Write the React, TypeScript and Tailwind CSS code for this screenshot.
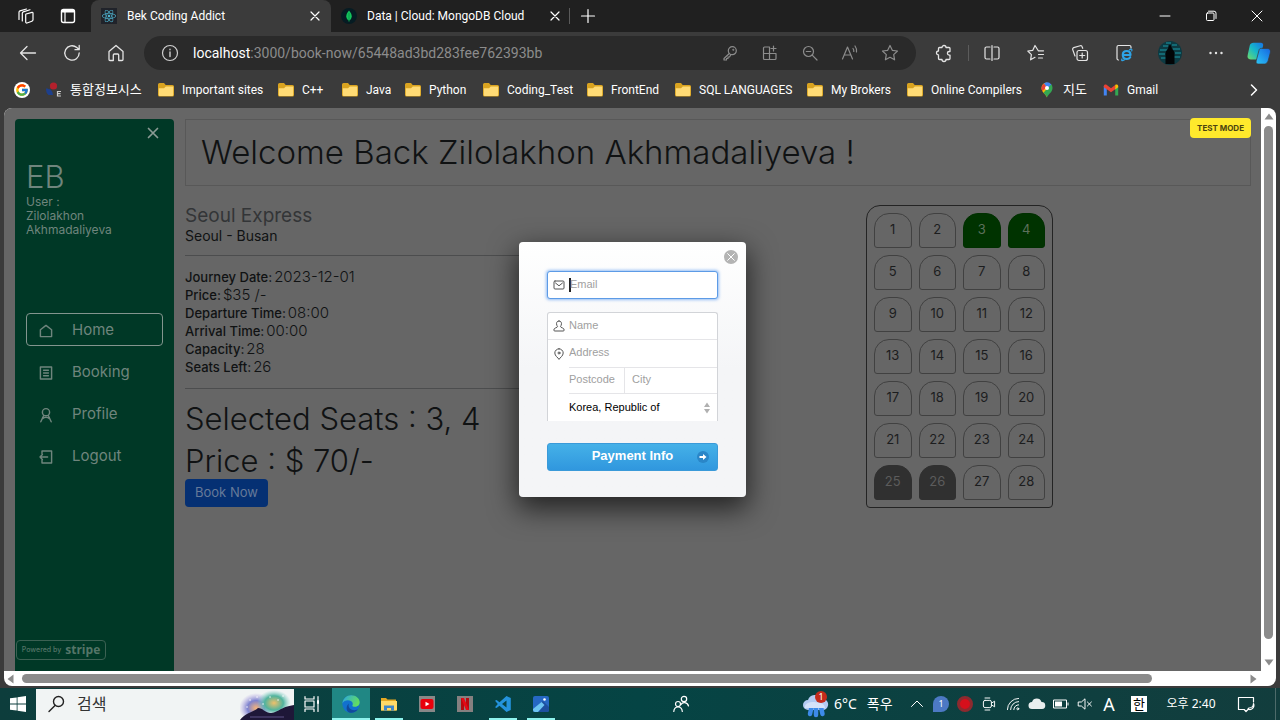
import React from "react";
import { FcGoogle } from "react-icons/fc";
import { FaReact } from "react-icons/fa";

type IconProps = { className?: string; children: React.ReactNode; box?: string };

function Icon({ className = "size-5", children, box = "0 0 20 20" }: IconProps) {
  return (
    <svg
      viewBox={box}
      className={`shrink-0 ${className}`}
      fill="none"
      stroke="currentColor"
      strokeWidth="1.2"
      strokeLinecap="round"
      strokeLinejoin="round"
      aria-hidden="true"
    >
      {children}
    </svg>
  );
}

function IconButton({ label, width, children }: { label: string; width: string; children: React.ReactNode }) {
  return (
    <button aria-label={label} className={`flex h-full shrink-0 items-center justify-center ${width}`}>
      {children}
    </button>
  );
}

const Cross = ({ className = "size-3" }: { className?: string }) => (
  <Icon className={className} box="0 0 12 12">
    <path d="M2 2l8 8M10 2l-8 8" />
  </Icon>
);

function MongoLeaf() {
  return (
    <svg viewBox="0 0 16 16" className="size-4 shrink-0" aria-hidden="true">
      <circle cx="8" cy="8" r="8" fill="#061c23" />
      <path d="M8 2.500c1.600 2 2.700 3.600 2.700 5.700C10.700 10.300 9.500 11.800 8 12.700 6.500 11.800 5.300 10.300 5.300 8.200 5.300 6.100 6.400 4.500 8 2.500z" fill="#13c45c" />
      <path d="M8 5v9" stroke="#0a8a46" strokeWidth=".7" />
    </svg>
  );
}

function TabStrip() {
  return (
    <header className="flex h-8 shrink-0 items-stretch bg-[#202020] text-xs text-white">
      <div className="flex w-[91px] shrink-0 items-center pl-2">
        <IconButton label="Workspaces" width="w-9">
          <Icon className="size-5">
            <path d="M10 8l6-1.700a.8.8 0 0 1 1 .8v6.700a1.500 1.500 0 0 1-1.100 1.400L11 17a1 1 0 0 1-1.300-1V8.500z" />
            <path d="M6.300 15V7.300a1.500 1.500 0 0 1 1-1.400L14 3.800M3 13.500V6.300a1.500 1.500 0 0 1 1-1.400L10.500 3" />
          </Icon>
        </IconButton>
        <IconButton label="Tab actions" width="w-12">
          <Icon className="size-5">
            <rect x="3.500" y="3.500" width="13" height="13" rx="2" strokeWidth="1.400" />
            <path d="M4.500 5.300h11" strokeWidth="2.600" />
            <path d="M7 6v10" />
          </Icon>
        </IconButton>
      </div>
      <div className="flex w-60 shrink-0 items-center rounded-t-lg bg-[#3b3b3b] pr-2 pl-2.5">
        <span className="flex size-4 items-center justify-center bg-[#20232a] text-[#4fb4d0]">
          <FaReact className="size-3.5" />
        </span>
        <span className="flex-1 pl-2.5">Bek Coding Addict</span>
        <IconButton label="Close Bek Coding Addict" width="w-4">
          <Cross />
        </IconButton>
      </div>
      <div className="flex w-[238px] shrink-0 items-center pr-1.5 pl-2.5">
        <MongoLeaf />
        <span className="flex-1 pl-2.5 whitespace-nowrap">Data | Cloud: MongoDB Cloud</span>
        <IconButton label="Close MongoDB Cloud" width="w-4">
          <Cross />
        </IconButton>
      </div>
      <div className="my-2 w-px bg-[#5a5a5a]" />
      <IconButton label="New tab" width="w-9">
        <Icon className="size-5">
          <path d="M10 3.500v13M3.500 10h13" />
        </Icon>
      </IconButton>
      <div className="flex-1" />
      <IconButton label="Minimize" width="w-[46px]">
        <Icon className="size-3" box="0 0 12 12">
          <path d="M1 6h10" strokeWidth="1" />
        </Icon>
      </IconButton>
      <IconButton label="Restore" width="w-[46px]">
        <Icon className="size-3" box="0 0 12 12">
          <rect x="1.500" y="3" width="7.500" height="7.500" rx="1" strokeWidth="1" />
          <path d="M3.500 1.200h5.500a2 2 0 0 1 2 2v5.300" strokeWidth="1" />
        </Icon>
      </IconButton>
      <IconButton label="Close window" width="w-[46px]">
        <Icon className="size-3" box="0 0 12 12">
          <path d="M1 1l10 10M11 1L1 11" strokeWidth="1" />
        </Icon>
      </IconButton>
    </header>
  );
}

function AddressBar() {
  return (
    <div className="flex h-[34px] flex-1 items-center rounded-full bg-[#2a2a2a] pr-1.5 pl-4 text-[#8c8c8c]">
      <Icon className="size-5 text-[#d0d0d0]">
        <circle cx="10" cy="10" r="7.500" />
        <path d="M10 9v4.500M10 6.300v.4" strokeWidth="1.400" />
      </Icon>
      <div className="flex-1 pl-[13px] text-sm whitespace-nowrap">
        <span className="text-white">localhost</span>:3000/book-now/65448ad3bd283fee762393bb
      </div>
      <IconButton label="Saved passwords" width="w-10">
        <Icon>
          <circle cx="12.300" cy="7.700" r="4" />
          <path d="M9.300 10.500L4 15.500V17h2.500v-1.500H8V14h1.500l1.500-2.500" />
          <circle cx="13.300" cy="6.700" r=".4" />
        </Icon>
      </IconButton>
      <IconButton label="App available" width="w-10">
        <Icon>
          <path d="M9.500 4H4.500a1 1 0 0 0-1 1v10.500a1 1 0 0 0 1 1H15a1 1 0 0 0 1-1v-5H3.500M9.500 4v12.500M13.500 3v5M11 5.500h5" />
        </Icon>
      </IconButton>
      <IconButton label="Zoom" width="w-10">
        <Icon>
          <circle cx="8.500" cy="8.500" r="5" />
          <path d="M6.300 8.500h4.400M12.200 12.200L17 17" />
        </Icon>
      </IconButton>
      <IconButton label="Read aloud" width="w-10">
        <Icon>
          <path d="M2.500 16L7.500 4l5 12M4.200 12h6.600M13 5.500a4 4 0 0 1 .8 3M15 3a8 8 0 0 1 1.500 6" />
        </Icon>
      </IconButton>
      <IconButton label="Add to favorites" width="w-10">
        <Icon>
          <path d="M10 2.500l2.300 4.800 5.200.7-3.800 3.600.9 5.200L10 14.300l-4.600 2.500.9-5.200L2.500 8l5.200-.7z" />
        </Icon>
      </IconButton>
    </div>
  );
}

function Copilot() {
  return (
    <svg viewBox="0 0 26 26" className="size-6 shrink-0" aria-hidden="true">
      <defs>
        <linearGradient id="cpA" x1="0" y1="1" x2="1" y2="0">
          <stop offset="0" stopColor="#6fdc6a" />
          <stop offset=".5" stopColor="#16b8c9" />
          <stop offset="1" stopColor="#1672e8" />
        </linearGradient>
        <linearGradient id="cpB" x1="0" y1="1" x2="1" y2="0">
          <stop offset="0" stopColor="#2bc6f5" />
          <stop offset="1" stopColor="#1565e0" />
        </linearGradient>
      </defs>
      <path d="M7 2h8c2 0 3 1.500 2.400 3.500L14 17c-.6 2-1.500 3-3.500 3H4C1 20 0 18 .8 15L3 5c.5-2 2-3 4-3z" fill="url(#cpA)" />
      <path d="M15.500 8H22c3 0 4 2 3.200 5L23 21c-.6 2-2 4-4 4h-7c-2 0-2.500-1.500-2-3.500L13 10c.4-1.500 1-2 2.500-2z" fill="url(#cpB)" stroke="#3b3b3b" strokeWidth=".8" />
    </svg>
  );
}

function Toolbar() {
  return (
    <div className="flex h-[42px] shrink-0 items-center bg-[#3b3b3b] pl-1.5 text-[#e4e4e4]">
      <IconButton label="Back" width="w-11">
        <Icon>
          <path d="M17.500 10H2.500M9 3.500L2.500 10 9 16.500" strokeWidth="1.300" />
        </Icon>
      </IconButton>
      <IconButton label="Refresh" width="w-11">
        <Icon>
          <path d="M17.200 10a7.200 7.200 0 1 1-2.400-5.400L17 6.500M17.200 2.500v4.200H13" strokeWidth="1.300" />
        </Icon>
      </IconButton>
      <IconButton label="Home" width="w-11">
        <Icon>
          <path d="M3 8.500L10 2.500l7 6V16.500a1 1 0 0 1-1 1h-3.300V12a1 1 0 0 0-1-1H8.300a1 1 0 0 0-1 1v5.500H4a1 1 0 0 1-1-1z" strokeWidth="1.300" />
        </Icon>
      </IconButton>
      <div className="w-1.5" />
      <AddressBar />
      <div className="w-1" />
      <IconButton label="Extensions" width="w-12">
        <Icon>
          <path d="M8 4.500a2 2 0 0 1 4 0h3a1 1 0 0 1 1 1v3h-.8a1.800 1.800 0 0 0 0 3.600H16v3.400a1 1 0 0 1-1 1h-3a2 2 0 0 1-4 0H5.500a1 1 0 0 1-1-1V12a2 2 0 0 1 0-4V5.500a1 1 0 0 1 1-1z" strokeWidth="1.300" />
        </Icon>
      </IconButton>
      <div className="h-4 w-px bg-[#5c5c5c]" />
      <IconButton label="Split screen" width="w-[45px]">
        <Icon>
          <path d="M8 4H4.500a1.500 1.500 0 0 0-1.500 1.500v9A1.500 1.500 0 0 0 4.500 16H8M12 4h3.500A1.500 1.500 0 0 1 17 5.500v9a1.500 1.500 0 0 1-1.500 1.500H12M10 2.500v15" />
        </Icon>
      </IconButton>
      <IconButton label="Favorites" width="w-11">
        <Icon>
          <path d="M17.500 7.800h-5.200L9 2.500 6.800 7.300l-5 .7 3.600 3.600-.8 5.200L9 14.300M12.500 11.500h5M12.500 15h4" />
        </Icon>
      </IconButton>
      <IconButton label="Collections" width="w-11">
        <Icon>
          <rect x="7" y="7.500" width="10.500" height="10" rx="2" />
          <path d="M12.200 10v5M9.700 12.500h5M5 13L2.700 6.600a1.500 1.500 0 0 1 1-1.900l6.500-2a1.500 1.500 0 0 1 1.900 1l.6 1.600" />
        </Icon>
      </IconButton>
      <IconButton label="Internet Explorer mode" width="w-11">
        <Icon>
          <path d="M17 5V4a1.500 1.500 0 0 0-1.500-1.500h-11A1.500 1.500 0 0 0 3 4v11.500A1.500 1.500 0 0 0 4.500 17" />
          <path d="M9 12h7.500c0-2.500-1.500-4-3.800-4S8.800 9.700 8.800 12s1.500 4 4 4c1.600 0 2.700-.6 3.400-1.800" stroke="#2ea3e6" strokeWidth="2.200" />
          <path d="M8 16c-1 2 .5 2 2.500.8M15.500 6.800c2-1.300 3-.8 2.200 1.200" stroke="#2ea3e6" />
        </Icon>
      </IconButton>
      <IconButton label="Profile" width="w-12">
        <svg viewBox="0 0 24 24" className="size-6" aria-hidden="true">
          <circle cx="12" cy="12" r="12" fill="#0d3a42" />
          <path d="M2 9h7M1 13h6M3 17h5M15 8h7M17 12h6M16 16h6M5 5h5M14 4h5M8 2h5" stroke="#1b98a5" strokeWidth="1.100" />
          <path d="M7.500 23V13c0-3 1.500-4 2.500-5 .3-2 1-3.500 2-4.500 1 1 1.700 2.500 2 4.500 1 1 2.500 2 2.500 5v10z" fill="#020507" />
        </svg>
      </IconButton>
      <IconButton label="Settings and more" width="w-11">
        <Icon>
          <path d="M4.500 10h.01M10 10h.01M15.500 10h.01" strokeWidth="2.400" />
        </Icon>
      </IconButton>
      <IconButton label="Copilot" width="w-[42px]">
        <Copilot />
      </IconButton>
    </div>
  );
}

function Folder() {
  return (
    <svg viewBox="0 0 16 16" className="size-4 shrink-0" aria-hidden="true">
      <path d="M0 2.500A1.500 1.500 0 0 1 1.500 1H6l1.700 2H14.500A1.500 1.500 0 0 1 16 4.500V13a1.500 1.500 0 0 1-1.500 1.500h-13A1.500 1.500 0 0 1 0 13z" fill="#d9a320" />
      <path d="M.8 6.200H6L7.800 4.500h7.400V13a1 1 0 0 1-1 1H1.800a1 1 0 0 1-1-1z" fill="#ffdb75" />
    </svg>
  );
}

function SchoolMark() {
  return (
    <svg viewBox="0 0 16 16" className="size-4 shrink-0" aria-hidden="true">
      <circle cx="7.500" cy="4" r="3.600" fill="#b3202c" />
      <path d="M0 6.500c4 0 6.500 2 7 6.500H2.500C1 12 0 10 0 6.500z" fill="#1d3f8c" />
      <path d="M15 9.500h-3.500v4.500H15M11.500 11.700h3" stroke="#ccc" strokeWidth="1.200" fill="none" />
    </svg>
  );
}

function MapPin() {
  return (
    <svg viewBox="0 0 16 16" className="size-4 shrink-0" aria-hidden="true">
      <path d="M8 15.500C7.300 12.500 2.500 10.500 2.500 6A5.500 5.500 0 0 1 8 .5z" fill="#fbbc04" />
      <path d="M8 15.500c-.4-1.800-2-3-3.500-4.700L12 2c1 1 1.500 2.500 1.500 4 0 4.500-4.800 6.500-5.500 9.500z" fill="#34a853" />
      <path d="M2.500 6A5.500 5.500 0 0 1 5 1.400L8 5 3.300 9A5.500 5.500 0 0 1 2.500 6z" fill="#ea4335" />
      <path d="M5 1.400A5.500 5.500 0 0 1 12.300 2.500L8.500 6z" fill="#4285f4" />
      <circle cx="8" cy="6" r="2" fill="#fff" />
    </svg>
  );
}

function GmailMark() {
  return (
    <svg viewBox="0 0 16 16" className="size-4 shrink-0" aria-hidden="true">
      <path d="M.8 4v9.500h3V6z" fill="#4285f4" />
      <path d="M15.200 4v9.500h-3V6z" fill="#34a853" />
      <path d="M.8 4.500C.8 2.500 2.600 2 3.800 3L8 6.200 12.200 3v4.200L8 10.300 3.800 7.200v0l-3-2z" fill="#ea4335" />
      <path d="M12.200 3c1.200-1 3-.5 3 1.500v.7l-3 2.200z" fill="#fbbc04" />
    </svg>
  );
}

const bookmarks = [
  { name: "Important sites", width: "w-[120px]" },
  { name: "C++", width: "w-16" },
  { name: "Java", width: "w-[63px]" },
  { name: "Python", width: "w-[78px]" },
  { name: "Coding_Test", width: "w-[104px]" },
  { name: "FrontEnd", width: "w-[88px]" },
  { name: "SQL LANGUAGES", width: "w-[132px]" },
  { name: "My Brokers", width: "w-[100px]" },
  { name: "Online Compilers", width: "w-[132px]" },
];

function Bookmarks() {
  return (
    <nav className="flex h-[34px] shrink-0 items-center bg-[#3b3b3b] pr-5 pb-0.5 pl-3.5 text-xs whitespace-nowrap text-white">
      <a href="#google" aria-label="Google" className="flex w-8">
        <span className="flex size-4 items-center justify-center rounded-full bg-white">
          <FcGoogle className="size-3.5" />
        </span>
      </a>
      <a href="#school" className="flex w-28 items-center gap-2 text-[13px]">
        <SchoolMark />
        통합정보시스
      </a>
      {bookmarks.map((b) => (
        <a key={b.name} href="#folder" className={`flex shrink-0 items-center gap-2 ${b.width}`}>
          <Folder />
          {b.name}
        </a>
      ))}
      <a href="#maps" className="flex w-16 items-center gap-2 text-[13px]">
        <MapPin />
        지도
      </a>
      <a href="#gmail" className="flex items-center gap-2">
        <GmailMark />
        Gmail
      </a>
      <button aria-label="More bookmarks" className="ml-auto">
        <Icon className="size-3" box="0 0 12 12">
          <path d="M3.500 1l5 5-5 5" strokeWidth="1.500" />
        </Icon>
      </button>
    </nav>
  );
}

const menu = [
  {
    name: "Home",
    icon: <path d="M3 8.500L10 3l7 5.500V17H3z" />,
  },
  {
    name: "Booking",
    icon: <path d="M3 2.500h14v15H3zM7 6.500h6M7 10h6M7 13.500h6" />,
  },
  {
    name: "Profile",
    icon: <path d="M10 2a4.500 4.500 0 1 1 0 9 4.500 4.500 0 0 1 0-9zM3.500 18.500L7 11M16.500 18.500L13 11M6 14.500c2-2 6-2 8 0" />,
  },
  {
    name: "Logout",
    icon: <path d="M5 6V2.500h12v15H5V14M12 10H2.500M5.500 7l-3 3 3 3" />,
  },
];

function Sidebar() {
  return (
    <aside className="flex w-[159px] shrink-0 flex-col rounded-t-sm bg-[#003826] px-[11px] font-['Inter','Liberation_Sans',sans-serif] text-[#6f857d]">
      <button aria-label="Collapse menu" className="mt-2 mr-1 self-end text-[#8a9a94]">
        <Icon className="size-3" box="0 0 12 12">
          <path d="M1.500 1.500l9 9M10.500 1.500l-9 9" strokeWidth="1.700" />
        </Icon>
      </button>
      <h3 className="mt-5 text-[31px] leading-9 font-light">EB</h3>
      <p className="text-xs leading-[14px]">
        User :<br />
        Zilolakhon
        <br />
        Akhmadaliyeva
      </p>
      <ul className="mt-[76px] flex flex-col gap-[9px] text-[15px]">
        {menu.map((m) => (
          <li key={m.name}>
            <a
              href="#menu"
              className={`flex h-[33px] items-center gap-[18px] rounded-sm border pt-0.5 pl-[11px] ${
                m.name === "Home" ? "border-[#83958e]" : "border-transparent"
              }`}
            >
              <Icon className="size-4">
                <g strokeWidth="1.800">{m.icon}</g>
              </Icon>
              {m.name}
            </a>
          </li>
        ))}
      </ul>
      <div className="mt-auto mb-[11px] -ml-2.5 flex h-5 w-[90px] items-center justify-center gap-1 rounded-sm border border-[#3c6153] text-[#557568]">
        <span className="text-[7px] font-medium whitespace-nowrap">Powered by</span>
        <span className="font-['Open_Sans',sans-serif] text-xs leading-3 font-bold">stripe</span>
      </div>
    </aside>
  );
}

const details = [
  ["Journey Date:", "2023-12-01"],
  ["Price:", "$35 /-"],
  ["Departure Time:", "08:00"],
  ["Arrival Time:", "00:00"],
  ["Capacity:", "28"],
  ["Seats Left:", "26"],
];

const chosen = [3, 4];
const taken = [25, 26];

function seatStyle(n: number) {
  if (chosen.includes(n)) return "border-[#003000] bg-[#003300] text-[#5c705c]";
  if (taken.includes(n)) return "border-[#303030] bg-[#303030] text-[#5c5c5c]";
  return "border-[#414141] text-[#1c1d1e]";
}

function Seats() {
  return (
    <div className="grid w-[187px] grid-cols-4 gap-x-[7px] gap-y-[7px] rounded-t-[14px] rounded-b-sm border border-[#242424] p-[7px]">
      {Array.from({ length: 28 }, (_, i) => i + 1).map((n) => (
        <button
          key={n}
          className={`h-[35px] rounded-t-[15px] rounded-b-[3px] border pb-0.5 text-[13px] leading-none ${seatStyle(n)}`}
        >
          {n}
        </button>
      ))}
    </div>
  );
}

function BookingPage() {
  return (
    <main className="min-w-0 flex-1 font-['Inter','Liberation_Sans',sans-serif] text-[#101213]">
      <h1 className="flex h-[67px] items-center border border-[#585858] pl-[15px] text-[33px] font-light">
        Welcome Back Zilolakhon Akhmadaliyeva !
      </h1>
      <div className="flex pt-[19px]">
        <section className="w-1/2">
          <h2 className="text-[19px] leading-[22px] text-[#333537]">Seoul Express</h2>
          <p className="text-sm leading-[18px]">Seoul - Busan</p>
          <hr className="mt-2.5 border-[#4c4d4e]" />
          <div className="mt-3">
            {details.map(([k, v]) => (
              <p key={k} className="flex items-baseline gap-0.5 leading-[18px]">
                <span className="text-[13px] leading-[18px] font-medium">{k}</span>
                <span className="text-[15px] leading-[18px] font-light">{v}</span>
              </p>
            ))}
          </div>
          <hr className="mt-3 border-[#4c4d4e]" />
          <p className="mt-[9px] text-[31px] leading-[42px] font-light">Selected Seats : 3, 4</p>
          <p className="text-[31px] leading-[42px] font-light">Price : $ 70/-</p>
          <button className="-mt-[3px] flex h-7 items-center rounded-sm bg-[#053073] px-2.5 text-[13px] text-[#667a99]">
            Book Now
          </button>
        </section>
        <section className="w-1/2 pl-[148px]">
          <Seats />
        </section>
      </div>
    </main>
  );
}

const field = "w-full bg-transparent text-[11px] leading-none text-black outline-none placeholder:text-[#a0a0a0]";

function PaymentDialog() {
  return (
    <form
      role="dialog"
      aria-label="Payment"
      className="relative h-[255px] w-[227px] rounded-[4px] bg-linear-to-b from-white via-[#f4f5f7] to-[#f4f5f7] px-7 pt-[29px] font-['Liberation_Sans',sans-serif] shadow-[0_10px_28px_2px_rgba(0,0,0,0.65)]"
    >
      <button type="button" aria-label="Close payment" className="absolute top-2 right-2 flex size-3.5 items-center justify-center rounded-full bg-[#b4b4b4] text-white">
        <Cross className="size-2.5" />
      </button>
      <label className="flex h-7 items-center rounded-[3px] border border-[#5d9be6] bg-white pl-[5px] shadow-[0_0_3px_1px_rgba(80,150,240,0.6)]">
        <Icon className="size-3 text-[#555]" box="0 0 12 12">
          <rect x="1" y="2" width="10" height="8" rx="1" strokeWidth="1" />
          <path d="M2.500 4L6 6.800 9.500 4" strokeWidth="1" />
        </Icon>
        <span className="-mr-px ml-1 h-3.5 w-0.5 shrink-0 bg-[#222]" />
        <input type="email" aria-label="Email" placeholder="Email" className={`pb-[3px] ${field}`} />
      </label>
      <div className="mt-[13px] rounded-t-[3px] border-x border-t border-[#d2d4d8] bg-white">
        <label className="flex h-[27px] items-center gap-1 border-b border-[#e5e5e8] pl-[5px]">
          <Icon className="size-3 text-[#555]" box="0 0 12 12">
            <path d="M6 1c1.700 0 2.500 1.200 2.500 2.700S7.700 6 7.500 6.800c0 1 3.700.8 3.700 3.200 0 .8-.5 1-1 1H1.800c-.5 0-1-.2-1-1 0-2.400 3.700-2.200 3.700-3.200C4.300 6 3.500 5.200 3.500 3.700S4.300 1 6 1z" strokeWidth="1" />
          </Icon>
          <input aria-label="Name" placeholder="Name" className={`pb-[3px] ${field}`} />
        </label>
        <label className="flex h-[27px] items-center gap-1 pl-[5px]">
          <Icon className="size-3 text-[#555]" box="0 0 12 12">
            <path d="M6 .8a4.200 4.200 0 0 1 4.200 4.200C10.200 8 7 9.500 6 11.400 5 9.500 1.800 8 1.800 5A4.200 4.200 0 0 1 6 .8z" strokeWidth="1" />
            <circle cx="6" cy="5" r="1" strokeWidth="1" />
          </Icon>
          <input aria-label="Address" placeholder="Address" className={`pb-[3px] ${field}`} />
        </label>
        <div className="ml-[21px] flex h-[27px] border-y border-[#e5e5e8]">
          <input aria-label="Postcode" placeholder="Postcode" className={`${field} max-w-14 border-r border-[#e5e5e8] pb-[3px]`} />
          <input aria-label="City" placeholder="City" className={`${field} pb-[3px] pl-[7px]`} />
        </div>
        <div className="relative ml-[21px] flex h-[27px] items-center">
          <select aria-label="Country" className="w-full appearance-none bg-transparent text-[11px] text-black outline-none">
            <option>Korea, Republic of</option>
          </select>
          <svg viewBox="0 0 8 12" className="absolute right-1.5 h-3 w-2" fill="#b0b0b0" aria-hidden="true">
            <path d="M4 .5L7 5H1zM4 11.500L1 7h6z" />
          </svg>
        </div>
      </div>
      <button
        type="button"
        className="relative mt-[22px] flex h-7 w-full items-center justify-center rounded-[3px] border border-[#3a9ad9] bg-linear-to-b from-[#45b1e8] to-[#3097de] pb-0.5 text-[13px] font-bold text-white"
      >
        Payment Info
        <svg viewBox="0 0 12 12" className="absolute top-[7px] right-2 size-3" aria-hidden="true">
          <circle cx="6" cy="6" r="6" fill="#2a86c8" />
          <path d="M2.500 6h5" stroke="#fff" strokeWidth="2" />
          <path d="M6 3l3.500 3L6 9z" fill="#fff" />
        </svg>
      </button>
    </form>
  );
}

const Arrow = ({ d }: { d: string }) => (
  <svg viewBox="0 0 10 10" className="size-2.5 shrink-0" fill="#8b8b8b" aria-hidden="true">
    <path d={d} />
  </svg>
);

function Viewport() {
  return (
    <div className="flex min-h-0 flex-1 bg-[#3b3b3b] px-1 pb-0.5">
      <div className="flex min-w-0 flex-1 flex-col overflow-hidden rounded-lg bg-white">
        <div className="flex min-h-0 flex-1">
          <div className="relative flex min-w-0 flex-1 gap-[11px] overflow-hidden bg-[#666] pt-[11px] pr-2.5 pl-[11px]">
            <Sidebar />
            <BookingPage />
            <div className="absolute inset-0 flex items-start justify-center pt-[134px]">
              <PaymentDialog />
            </div>
            <span className="absolute top-2.5 right-2.5 flex h-5 items-center rounded-[4px] bg-[#ffe92c] px-[7px] font-['Inter','Liberation_Sans',sans-serif] text-[8px] font-bold whitespace-nowrap text-[#4b4310]">
              TEST MODE
            </span>
          </div>
          <div className="flex w-[15px] shrink-0 flex-col items-center py-1">
            <Arrow d="M5 1.500L9.500 7.500H.5z" />
            <div className="mt-1 mb-[18px] w-[9px] flex-1 rounded-full bg-[#8b8b8b]" />
            <Arrow d="M5 8.500L9.500 2.500H.5z" />
          </div>
        </div>
        <div className="flex h-[15px] shrink-0 items-center pr-[18px] pl-0.5">
          <Arrow d="M1.500 5L7.500.5v9z" />
          <div className="mr-24 ml-1.5 h-[9px] flex-1 rounded-full bg-[#8b8b8b]" />
          <Arrow d="M8.500 5L2.500.5v9z" />
        </div>
      </div>
    </div>
  );
}

function SearchArt() {
  return (
    <svg viewBox="0 0 54 30" className="h-[30px] w-[54px]" aria-hidden="true">
      <defs>
        <radialGradient id="artA">
          <stop offset="0" stopColor="#f4b37a" />
          <stop offset=".5" stopColor="#7d83cf" />
          <stop offset="1" stopColor="#b9a6e2" stopOpacity="0" />
        </radialGradient>
        <radialGradient id="artB">
          <stop offset="0" stopColor="#efc06a" />
          <stop offset=".55" stopColor="#50b39d" />
          <stop offset="1" stopColor="#8fd5d0" stopOpacity="0" />
        </radialGradient>
      </defs>
      <ellipse cx="16" cy="18" rx="17" ry="15" fill="url(#artA)" />
      <ellipse cx="34" cy="13" rx="17" ry="13" fill="url(#artB)" />
      <path d="M0 30c5-7 14-8 18-12 5 0 6 4 12 5 8 0 10-6 24-8v15z" fill="#1e1738" />
      <path d="M10 27h34" stroke="#5d5286" strokeWidth="1" />
      <path d="M10 10h.1M17 7h.1M7 17h.1M30 7h.1M38 10h.1M43 6h.1M23 14h.1" stroke="#fff" strokeWidth="1.300" strokeLinecap="round" />
    </svg>
  );
}

function EdgeMark() {
  return (
    <svg viewBox="0 0 18 18" className="size-[18px]" aria-hidden="true">
      <defs>
        <linearGradient id="edA" x1="0" y1="0" x2="1" y2=".4">
          <stop offset="0" stopColor="#2aa5e0" />
          <stop offset="1" stopColor="#62dd62" />
        </linearGradient>
      </defs>
      <circle cx="9" cy="9" r="8.700" fill="#1271cf" />
      <path d="M.4 8.500C1 3.500 4.600.3 9.200.3c5 0 8.500 3.500 8.500 7 0 3-2.300 4.500-4.700 4.500-1.700 0-2.700-.6-2.700-1.300.8-.8.8-3-1-4.300C6.500 4.500 2 5 .4 8.500z" fill="url(#edA)" />
      <path d="M7 8.500c-1.500 3 1 7 5.500 6.800 1.500 0 2.800-.6 3.500-1.200-2 3.500-6 4.300-8.800 3.300C3.500 16 4 10.500 7 8.500z" fill="#114a9c" />
    </svg>
  );
}

const apps = [
  { name: "Microsoft Edge", cell: "bg-[#208784]", bar: "w-full bg-[#8ff3ee]", icon: <EdgeMark /> },
  {
    name: "File Explorer",
    cell: "",
    bar: "w-7 bg-[#8ff3ee]",
    icon: (
      <svg viewBox="0 0 16 16" className="size-4" aria-hidden="true">
        <path d="M0 2h5l1.500 1.500H15v11H0z" fill="#e5a823" />
        <path d="M0 5h16v9.500H0z" fill="#ffd968" />
        <path d="M3 14.500V9.500h10v5h-3v-2.500H6v2.500z" fill="#3f86c9" />
      </svg>
    ),
  },
  {
    name: "YouTube",
    cell: "",
    bar: "",
    icon: (
      <svg viewBox="0 0 16 16" className="size-4" aria-hidden="true">
        <path d="M0 0h16v16H0z" fill="#888" />
        <rect x="1.500" y="3" width="13" height="10" rx="2" fill="#e8000b" />
        <path d="M6.500 5.700L10.500 8l-4 2.300z" fill="#fff" />
      </svg>
    ),
  },
  {
    name: "Netflix",
    cell: "",
    bar: "",
    icon: (
      <svg viewBox="0 0 16 16" className="size-4" aria-hidden="true">
        <path d="M0 0h16v16H0z" fill="#858080" />
        <path d="M4 2h3v12H4zM9 2h3v12H9z" fill="#b50a10" />
        <path d="M4 2h3l5 12H9z" fill="#e50914" />
      </svg>
    ),
  },
  {
    name: "Visual Studio Code",
    cell: "",
    bar: "w-7 bg-[#8ff3ee]",
    icon: (
      <svg viewBox="0 0 16 16" className="size-4" aria-hidden="true">
        <path d="M11.500 0L15.800 2v12l-4.300 2L4.500 9.800 1.600 12 0 11.200 2.800 8 0 4.800 1.600 4l2.900 2.200zM11.500 4.500L7 8l4.500 3.500z" fill="#2493dc" fillRule="evenodd" />
      </svg>
    ),
  },
  {
    name: "Photos",
    cell: "",
    bar: "w-7 bg-[#8ff3ee]",
    icon: (
      <svg viewBox="0 0 16 16" className="size-4" aria-hidden="true">
        <rect width="16" height="16" rx="2" fill="#2668c4" />
        <path d="M0 14L10 5l6 6v3a2 2 0 0 1-2 2H2a2 2 0 0 1-2-2z" fill="#1d4f9f" />
        <path d="M0 13L8.500 6l3 3L5 16H2a2 2 0 0 1-2-2z" fill="#6cc4f2" />
        <circle cx="11.500" cy="3.500" r="1.300" fill="#fff" />
      </svg>
    ),
  },
];

function Taskbar() {
  return (
    <footer className="flex h-8 shrink-0 items-stretch bg-linear-to-r from-[#0d3d3c] via-[#054444] to-[#123d3d] font-['Noto_Sans','Noto_Sans_CJK_KR',sans-serif] text-white">
      <IconButton label="Start" width="w-9">
        <svg viewBox="0 0 16 16" className="size-4" fill="#fff" aria-hidden="true">
          <path d="M0 2.300l6.700-.9v6.200H0zM7.500 1.200L16 0v7.600H7.500zM0 8.400h6.700v6.200L0 13.700zM7.500 8.400H16V16l-8.500-1.200z" />
        </svg>
      </IconButton>
      <label className="mt-px flex w-[258px] shrink-0 items-end bg-[#f1f4f4] text-[#222]">
        <Icon className="mb-1.5 ml-[11px] size-5">
          <circle cx="11.500" cy="7.500" r="5" strokeWidth="1.400" />
          <path d="M8 11.500L2 17.500" strokeWidth="1.400" />
        </Icon>
        <input
          aria-label="검색"
          placeholder="검색"
          className="mb-1 ml-2.5 min-w-0 flex-1 bg-transparent text-base outline-none placeholder:text-[#333]"
        />
        <SearchArt />
      </label>
      <IconButton label="Task view" width="w-[38px]">
        <Icon className="size-5">
          <path d="M2 2.500V5h9V2.500M2 17.500V15h9v2.500M2 7h9v6H2zM15 2.500v4M15 9v8.500" />
          <path d="M15 7v2" strokeWidth="2" />
        </Icon>
      </IconButton>
      {apps.map((a) => (
        <button
          key={a.name}
          aria-label={a.name}
          className={`relative flex w-[38px] shrink-0 items-center justify-center ${a.cell}`}
        >
          {a.icon}
          <span className={`absolute bottom-0 h-0.5 ${a.bar}`} />
        </button>
      ))}
      <div className="flex-1" />
      <IconButton label="People" width="w-9">
        <Icon className="size-5">
          <circle cx="13" cy="5" r="2.700" />
          <path d="M10 10.500c1.500-3 6.500-2.500 7.500 1.500" />
          <circle cx="7" cy="10" r="2.500" />
          <path d="M2.800 17.500c.5-6 8-6 8.500 0" />
        </Icon>
      </IconButton>
      <div className="w-[103px] shrink-0" />
      <button className="flex w-[103px] shrink-0 items-center gap-1 text-sm whitespace-nowrap">
        <svg viewBox="0 0 28 26" className="size-7 shrink-0" aria-hidden="true">
          <path d="M6 19a5 5 0 0 1 0-10 7 7 0 0 1 13-1 5.500 5.500 0 0 1 3 11z" fill="#b4cbf3" />
          <path d="M8 23l1.500-7M14 24v-7M20.500 23l-1.500-7" stroke="#3d8bea" strokeWidth="4.500" strokeLinecap="round" />
          <path d="M3 17a8 5 0 0 1 9-6l6 1a6 6 0 0 1 5 5z" fill="#d5e2fa" />
          <circle cx="19" cy="6" r="6" fill="#c42b1c" />
          <text x="19" y="9" fontSize="9" textAnchor="middle" fill="#fff">
            1
          </text>
        </svg>
        <span>6°C</span>
        <span className="pl-1.5">폭우</span>
      </button>
      <div className="flex shrink-0 items-center">
        <IconButton label="Hidden icons" width="w-6">
          <Icon className="size-3.5" box="0 0 14 14">
            <path d="M1.500 9.500L7 4l5.500 5.500" strokeWidth="1" />
          </Icon>
        </IconButton>
        <IconButton label="Notices" width="w-6">
          <span className="flex size-4 items-center justify-center rounded-full rounded-bl-none bg-[#4c79c4] text-[9px]">1</span>
        </IconButton>
        <IconButton label="Recorder" width="w-6">
          <span className="size-4 rounded-full border-3 border-[#8d2a2f] bg-[#d6101c]" />
        </IconButton>
        <IconButton label="Meet now" width="w-6">
          <Icon className="size-4">
            <rect x="3" y="5.500" width="10" height="9" rx="2" />
            <path d="M13 9l4-2.500v7L13 11M5 2.500h6M5 17.500h6" />
          </Icon>
        </IconButton>
        <IconButton label="Network" width="w-6">
          <Icon className="size-4">
            <path d="M3 17A14 14 0 0 1 17 3M7 17A10 10 0 0 1 17 7M11 17a6 6 0 0 1 6-6" />
            <circle cx="16" cy="16" r="1.200" />
          </Icon>
        </IconButton>
        <IconButton label="OneDrive" width="w-6">
          <svg viewBox="0 0 18 12" className="h-3 w-[18px]" aria-hidden="true">
            <path d="M4 11a3.500 3.500 0 0 1 0-7 5 5 0 0 1 9.500 0 3.500 3.500 0 0 1 .5 7z" fill="#e9eeee" />
          </svg>
        </IconButton>
        <IconButton label="Battery" width="w-6">
          <svg viewBox="0 0 18 12" className="h-3 w-[18px]" fill="none" stroke="#fff" aria-hidden="true">
            <path d="M1.500 2h13v8h-13zM16 4.500v3" />
            <path d="M3 3.500h7v5H3z" fill="#fff" stroke="none" />
          </svg>
        </IconButton>
        <IconButton label="Muted" width="w-6">
          <Icon className="size-4">
            <path d="M2 7.500h3.500L10 3.500v13l-4.500-4H2zM13 7.500l5 5M18 7.500l-5 5" />
          </Icon>
        </IconButton>
        <span className="w-6 text-center text-lg">A</span>
        <span className="mr-[18px] ml-2.5 flex h-4 w-4 items-center justify-center bg-white text-[13px] leading-none text-black">한</span>
      </div>
      <time className="flex w-[52px] shrink-0 items-center justify-center text-xs whitespace-nowrap">오후 2:40</time>
      <IconButton label="Notifications" width="w-[58px]">
        <Icon className="size-5">
          <path d="M12 15.500l-2 2-1.800-2H2.500v-12h15V8M13 14a4.500 4.500 0 0 0 4.500-4.500c1.500 3.500-2 7.500-5.500 5.500z" />
        </Icon>
      </IconButton>
      <div className="mr-1 w-px bg-[#4d6b6a]" />
    </footer>
  );
}

export default function App() {
  return (
    <div className="flex h-screen flex-col overflow-hidden bg-[#3b3b3b] font-['Roboto','Noto_Sans_CJK_KR',sans-serif]">
      <TabStrip />
      <Toolbar />
      <Bookmarks />
      <Viewport />
      <Taskbar />
    </div>
  );
}
